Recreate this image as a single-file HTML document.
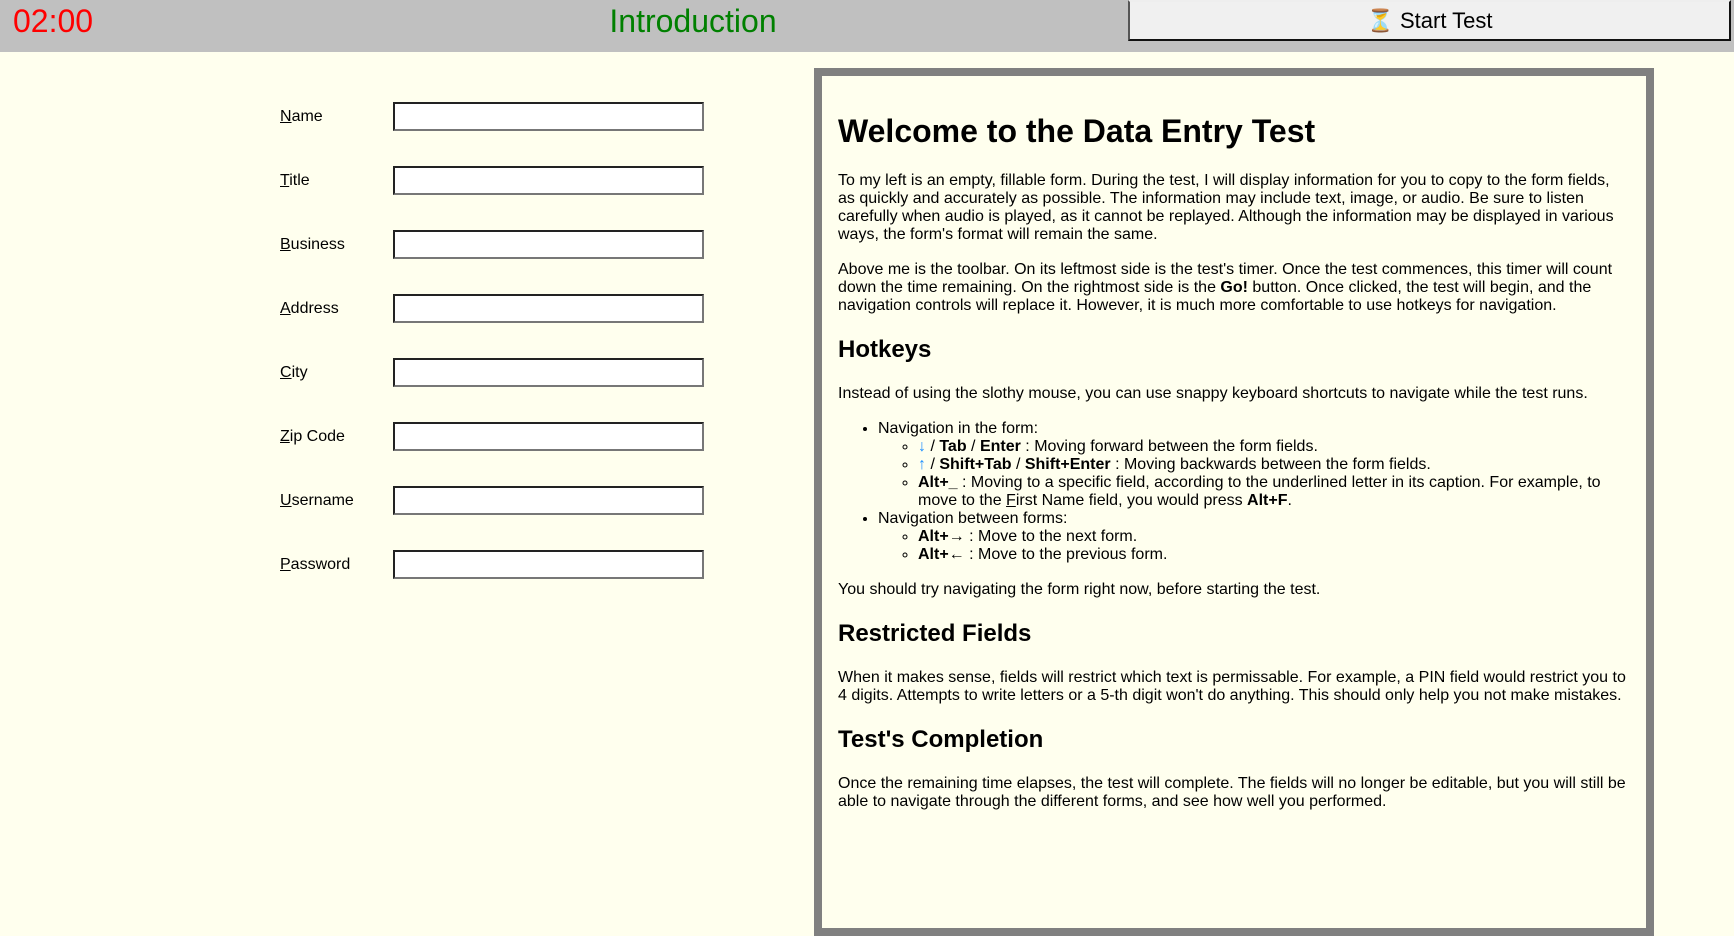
<!DOCTYPE html>
<html><head><meta charset="utf-8"><style>
html,body{margin:0;padding:0;width:1734px;height:847px;overflow:hidden;background:#ffffee;font-family:"Liberation Sans",Arial,sans-serif;color:#000}
#bar{position:absolute;left:0;top:0;width:1734px;height:52px;background:#c0c0c0}
#timer{position:absolute;left:13px;top:3px;font-size:32px;color:#f00}
#title{position:absolute;left:0;width:1386px;top:3px;text-align:center;font-size:32px;color:#008000}
#btn{position:absolute;left:1128px;top:0;width:599px;height:37px;background:#f0f0f0;border:2px solid;border-color:#eee #111 #111 #555;text-align:center;font-size:22px;line-height:38px}
.lbl{position:absolute;left:280px;font-size:16px}
.inp{position:absolute;left:393px;width:307px;height:25px;border:2px solid;border-color:#222 #777 #777 #222;background:#fff;box-sizing:content-box}
#panel{position:absolute;left:814px;top:68px;width:792px;height:820px;border:8px solid #808080;padding:16px;box-sizing:content-box;overflow:hidden}
h1{font-size:32px;margin:21px 0 22px}
h2{font-size:24px;margin:21px 0}
p{font-size:16px;margin:17px 0;line-height:18px}
ul{font-size:16px;margin:17px 0;padding-left:40px;line-height:18px}
ul ul{margin:0;list-style:circle}
.ar{color:#1e90ff}
</style></head><body>
<div id="bar"><div id="timer">02:00</div><div id="title">Introduction</div><div id="btn">⏳ Start Test</div></div>
<div class="lbl" style="top:108px"><u>N</u>ame</div><div class="inp" style="top:102px"></div>
<div class="lbl" style="top:172px"><u>T</u>itle</div><div class="inp" style="top:166px"></div>
<div class="lbl" style="top:236px"><u>B</u>usiness</div><div class="inp" style="top:230px"></div>
<div class="lbl" style="top:300px"><u>A</u>ddress</div><div class="inp" style="top:294px"></div>
<div class="lbl" style="top:364px"><u>C</u>ity</div><div class="inp" style="top:358px"></div>
<div class="lbl" style="top:428px"><u>Z</u>ip Code</div><div class="inp" style="top:422px"></div>
<div class="lbl" style="top:492px"><u>U</u>sername</div><div class="inp" style="top:486px"></div>
<div class="lbl" style="top:556px"><u>P</u>assword</div><div class="inp" style="top:550px"></div>
<div id="panel">
<h1>Welcome to the Data Entry Test</h1>
<p>To my left is an empty, fillable form. During the test, I will display information for you to copy to the form fields, as quickly and accurately as possible. The information may include text, image, or audio. Be sure to listen carefully when audio is played, as it cannot be replayed. Although the information may be displayed in various ways, the form's format will remain the same.</p>
<p>Above me is the toolbar. On its leftmost side is the test's timer. Once the test commences, this timer will count down the time remaining. On the rightmost side is the <b>Go!</b> button. Once clicked, the test will begin, and the navigation controls will replace it. However, it is much more comfortable to use hotkeys for navigation.</p>
<h2>Hotkeys</h2>
<p>Instead of using the slothy mouse, you can use snappy keyboard shortcuts to navigate while the test runs.</p>
<ul><li>Navigation in the form:<ul>
<li><span class="ar">↓</span> / <b>Tab</b> / <b>Enter</b> : Moving forward between the form fields.</li>
<li><span class="ar">↑</span> / <b>Shift+Tab</b> / <b>Shift+Enter</b> : Moving backwards between the form fields.</li>
<li><b>Alt+_</b> : Moving to a specific field, according to the underlined letter in its caption. For example, to<br>move to the <u>F</u>irst Name field, you would press <b>Alt+F</b>.</li></ul></li>
<li>Navigation between forms:<ul>
<li><b>Alt+→</b> : Move to the next form.</li>
<li><b>Alt+←</b> : Move to the previous form.</li></ul></li></ul>
<p>You should try navigating the form right now, before starting the test.</p>
<h2>Restricted Fields</h2>
<p>When it makes sense, fields will restrict which text is permissable. For example, a PIN field would restrict you to<br>4 digits. Attempts to write letters or a 5-th digit won't do anything. This should only help you not make mistakes.</p>
<h2>Test's Completion</h2>
<p>Once the remaining time elapses, the test will complete. The fields will no longer be editable, but you will still be<br>able to navigate through the different forms, and see how well you performed.</p>
</div>
</body></html>
